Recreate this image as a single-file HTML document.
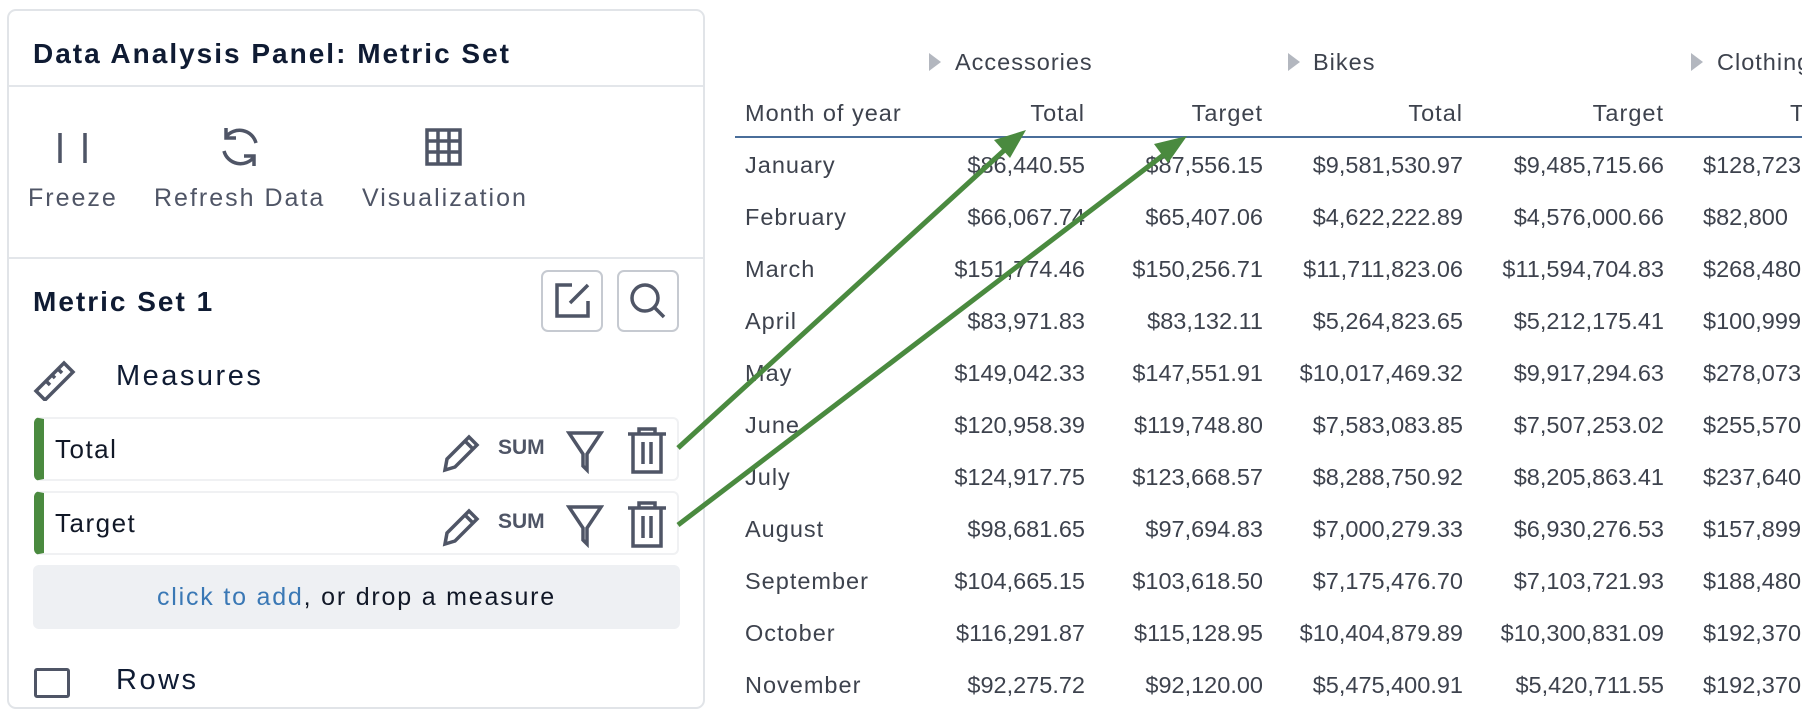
<!DOCTYPE html>
<html><head><meta charset="utf-8"><style>
*{margin:0;padding:0;box-sizing:border-box}
body{width:1802px;height:679px;overflow:hidden;background:#fff;font-family:"Liberation Sans",sans-serif;position:relative}
.a{position:absolute;white-space:nowrap}
.panel{position:absolute;left:7px;top:9px;width:698px;height:700px;border:2px solid #e1e4e8;border-radius:9px;background:#fff}
.tl{font-size:25px;color:#4f5566;letter-spacing:2px}
.cell{position:absolute;font-size:23.5px;color:#3d424d;text-align:right;white-space:nowrap}
.lab{letter-spacing:1px}
.ic{stroke:#4f5566;fill:none;stroke-width:3.5}
</style></head><body>
<div class="panel"></div>
<div class="a" style="left:33px;top:38px;font-size:28px;font-weight:bold;color:#0f1b33;letter-spacing:2px">Data Analysis Panel: Metric Set</div>
<div class="a" style="left:9px;top:85px;width:694px;height:2px;background:#e3e6ea"></div>
<svg class="a" style="left:50px;top:128px" width="46" height="38"><path class="ic" d="M10 5v30M35 5v30"/></svg>
<svg class="a" style="left:217px;top:124px" width="46" height="46"><path class="ic" d="M39 19A17 17 0 0 0 9 13M7 27A17 17 0 0 0 37 33M9 4v10h10M37 42V32H27"/></svg>
<svg class="a" style="left:424px;top:127px" width="40" height="40"><rect class="ic" x="3" y="3" width="33" height="34"/><path class="ic" d="M14 3v34M25 3v34M3 14h33M3 25h33" stroke-width="3"/></svg>
<div class="a tl" style="left:28px;top:184px">Freeze</div>
<div class="a tl" style="left:154px;top:184px">Refresh Data</div>
<div class="a tl" style="left:362px;top:184px">Visualization</div>
<div class="a" style="left:9px;top:257px;width:694px;height:2px;background:#e3e6ea"></div>
<div class="a" style="left:33px;top:286px;font-size:28px;font-weight:bold;color:#0f1b33;letter-spacing:2px">Metric Set 1</div>
<div class="a" style="left:541px;top:270px;width:62px;height:62px;border:2px solid #c6cad1;border-radius:7px"></div>
<div class="a" style="left:617px;top:270px;width:62px;height:62px;border:2px solid #c6cad1;border-radius:7px"></div>
<svg class="a" style="left:552px;top:281px" width="40" height="40"><path class="ic" d="M20 4H5v31h31V20M18 22l18-18"/></svg>
<svg class="a" style="left:628px;top:281px" width="40" height="40"><circle class="ic" cx="17" cy="17" r="13"/><path class="ic" d="M26 26l10 10"/></svg>
<svg class="a" style="left:32px;top:355px" width="46" height="46"><path class="ic" d="M4 36L32 8l9 9-28 28z M14 26l4 4M20 20l3 3M26 14l4 4" stroke-width="3.5"/></svg>
<div class="a" style="left:116px;top:360px;font-size:29px;color:#0f1b33;letter-spacing:2.5px">Measures</div>
<div class="a" style="left:34px;top:417px;width:645px;height:64px;border:2px solid #f0f1f3;border-left:10px solid #4a8a3f;border-radius:6px"></div>
<div class="a" style="left:34px;top:491px;width:645px;height:64px;border:2px solid #f0f1f3;border-left:10px solid #4a8a3f;border-radius:6px"></div>
<div class="a" style="left:55px;top:434px;font-size:26px;color:#111827;letter-spacing:1.5px">Total</div>
<div class="a" style="left:55px;top:508px;font-size:26px;color:#111827;letter-spacing:1.5px">Target</div>
<svg class="a" style="left:440px;top:430px" width="44" height="44"><path class="ic" d="M5 40l2-11L29 7l8 8-22 22z M25 11l8 8" stroke-width="3"/></svg>
<svg class="a" style="left:440px;top:504px" width="44" height="44"><path class="ic" d="M5 40l2-11L29 7l8 8-22 22z M25 11l8 8" stroke-width="3"/></svg>
<div class="a" style="left:498px;top:436px;font-size:21px;font-weight:bold;color:#4f5566">SUM</div>
<div class="a" style="left:498px;top:510px;font-size:21px;font-weight:bold;color:#4f5566">SUM</div>
<svg class="a" style="left:566px;top:430px" width="38" height="44"><path class="ic" d="M3 3h32L21 24v16l-4-4V24z"/></svg>
<svg class="a" style="left:566px;top:504px" width="38" height="44"><path class="ic" d="M3 3h32L21 24v16l-4-4V24z"/></svg>
<svg class="a" style="left:626px;top:427px" width="42" height="48"><path class="ic" d="M2 7h38M13 7V2h16v5M7 7v38h28V7M17 15v22M25 15v22"/></svg>
<svg class="a" style="left:626px;top:501px" width="42" height="48"><path class="ic" d="M2 7h38M13 7V2h16v5M7 7v38h28V7M17 15v22M25 15v22"/></svg>
<div class="a" style="left:33px;top:565px;width:647px;height:64px;background:#eef0f3;border-radius:6px;text-align:center;line-height:64px;font-size:25px;color:#111827;letter-spacing:1.8px"><span style="color:#3a78b5">click to add</span>, or drop a measure</div>
<div class="a" style="left:34px;top:668px;width:36px;height:30px;border:3.5px solid #4f5566;border-radius:3px"></div>
<div class="a" style="left:116px;top:664px;font-size:29px;color:#0f1b33;letter-spacing:2.5px">Rows</div>

<svg class="a" style="left:926px;top:50px" width="20" height="24"><path d="M3 3l12 9-12 9z" fill="#b3b7bf"/></svg>
<svg class="a" style="left:1285px;top:50px" width="20" height="24"><path d="M3 3l12 9-12 9z" fill="#b3b7bf"/></svg>
<svg class="a" style="left:1688px;top:50px" width="20" height="24"><path d="M3 3l12 9-12 9z" fill="#b3b7bf"/></svg>
<div class="a lab" style="left:955px;top:49px;font-size:23.5px;color:#3d424d">Accessories</div>
<div class="a lab" style="left:1313px;top:49px;font-size:23.5px;color:#3d424d">Bikes</div>
<div class="a lab" style="left:1717px;top:49px;font-size:23.5px;color:#3d424d">Clothing</div>
<div class="a lab" style="left:745px;top:100px;font-size:23.5px;color:#3d424d">Month of year</div>
<div class="cell lab" style="right:717px;top:100px">Total</div>
<div class="cell lab" style="right:539px;top:100px">Target</div>
<div class="cell lab" style="right:339px;top:100px">Total</div>
<div class="cell lab" style="right:138px;top:100px">Target</div>
<div class="cell" style="left:1790px;top:100px;text-align:left">T</div>
<div class="a" style="left:735px;top:136px;width:1067px;height:2px;background:#4a6e9a"></div>
<div id="rows"></div>
<script>
var d=[["January","$86,440.55","$87,556.15","$9,581,530.97","$9,485,715.66","$128,723"],
["February","$66,067.74","$65,407.06","$4,622,222.89","$4,576,000.66","$82,800"],
["March","$151,774.46","$150,256.71","$11,711,823.06","$11,594,704.83","$268,480"],
["April","$83,971.83","$83,132.11","$5,264,823.65","$5,212,175.41","$100,999"],
["May","$149,042.33","$147,551.91","$10,017,469.32","$9,917,294.63","$278,073"],
["June","$120,958.39","$119,748.80","$7,583,083.85","$7,507,253.02","$255,570"],
["July","$124,917.75","$123,668.57","$8,288,750.92","$8,205,863.41","$237,640"],
["August","$98,681.65","$97,694.83","$7,000,279.33","$6,930,276.53","$157,899"],
["September","$104,665.15","$103,618.50","$7,175,476.70","$7,103,721.93","$188,480"],
["October","$116,291.87","$115,128.95","$10,404,879.89","$10,300,831.09","$192,370"],
["November","$92,275.72","$92,120.00","$5,475,400.91","$5,420,711.55","$192,370"]];
var h="",r=[717,539,339,138];
d.forEach(function(x,i){var t=152+i*52;
h+='<div class="a lab" style="left:745px;top:'+t+'px;font-size:23.5px;color:#3d424d">'+x[0]+'</div>';
for(var j=0;j<4;j++)h+='<div class="cell" style="right:'+r[j]+'px;top:'+t+'px">'+x[j+1]+'</div>';
h+='<div class="cell" style="left:1703px;top:'+t+'px;text-align:left">'+x[5]+'</div>';});
document.getElementById("rows").innerHTML=h;
</script>
<svg class="a" style="left:0;top:0" width="1802" height="679">
<g stroke="#4a8a3f" stroke-width="5" fill="#4a8a3f">
<line x1="678" y1="448" x2="1010" y2="145"/>
<path d="M1026 130l-32 10 16 18z" stroke="none"/>
<line x1="678" y1="525" x2="1170" y2="150"/>
<path d="M1187 136l-33 8 14 19z" stroke="none"/>
</g></svg>
</body></html>
